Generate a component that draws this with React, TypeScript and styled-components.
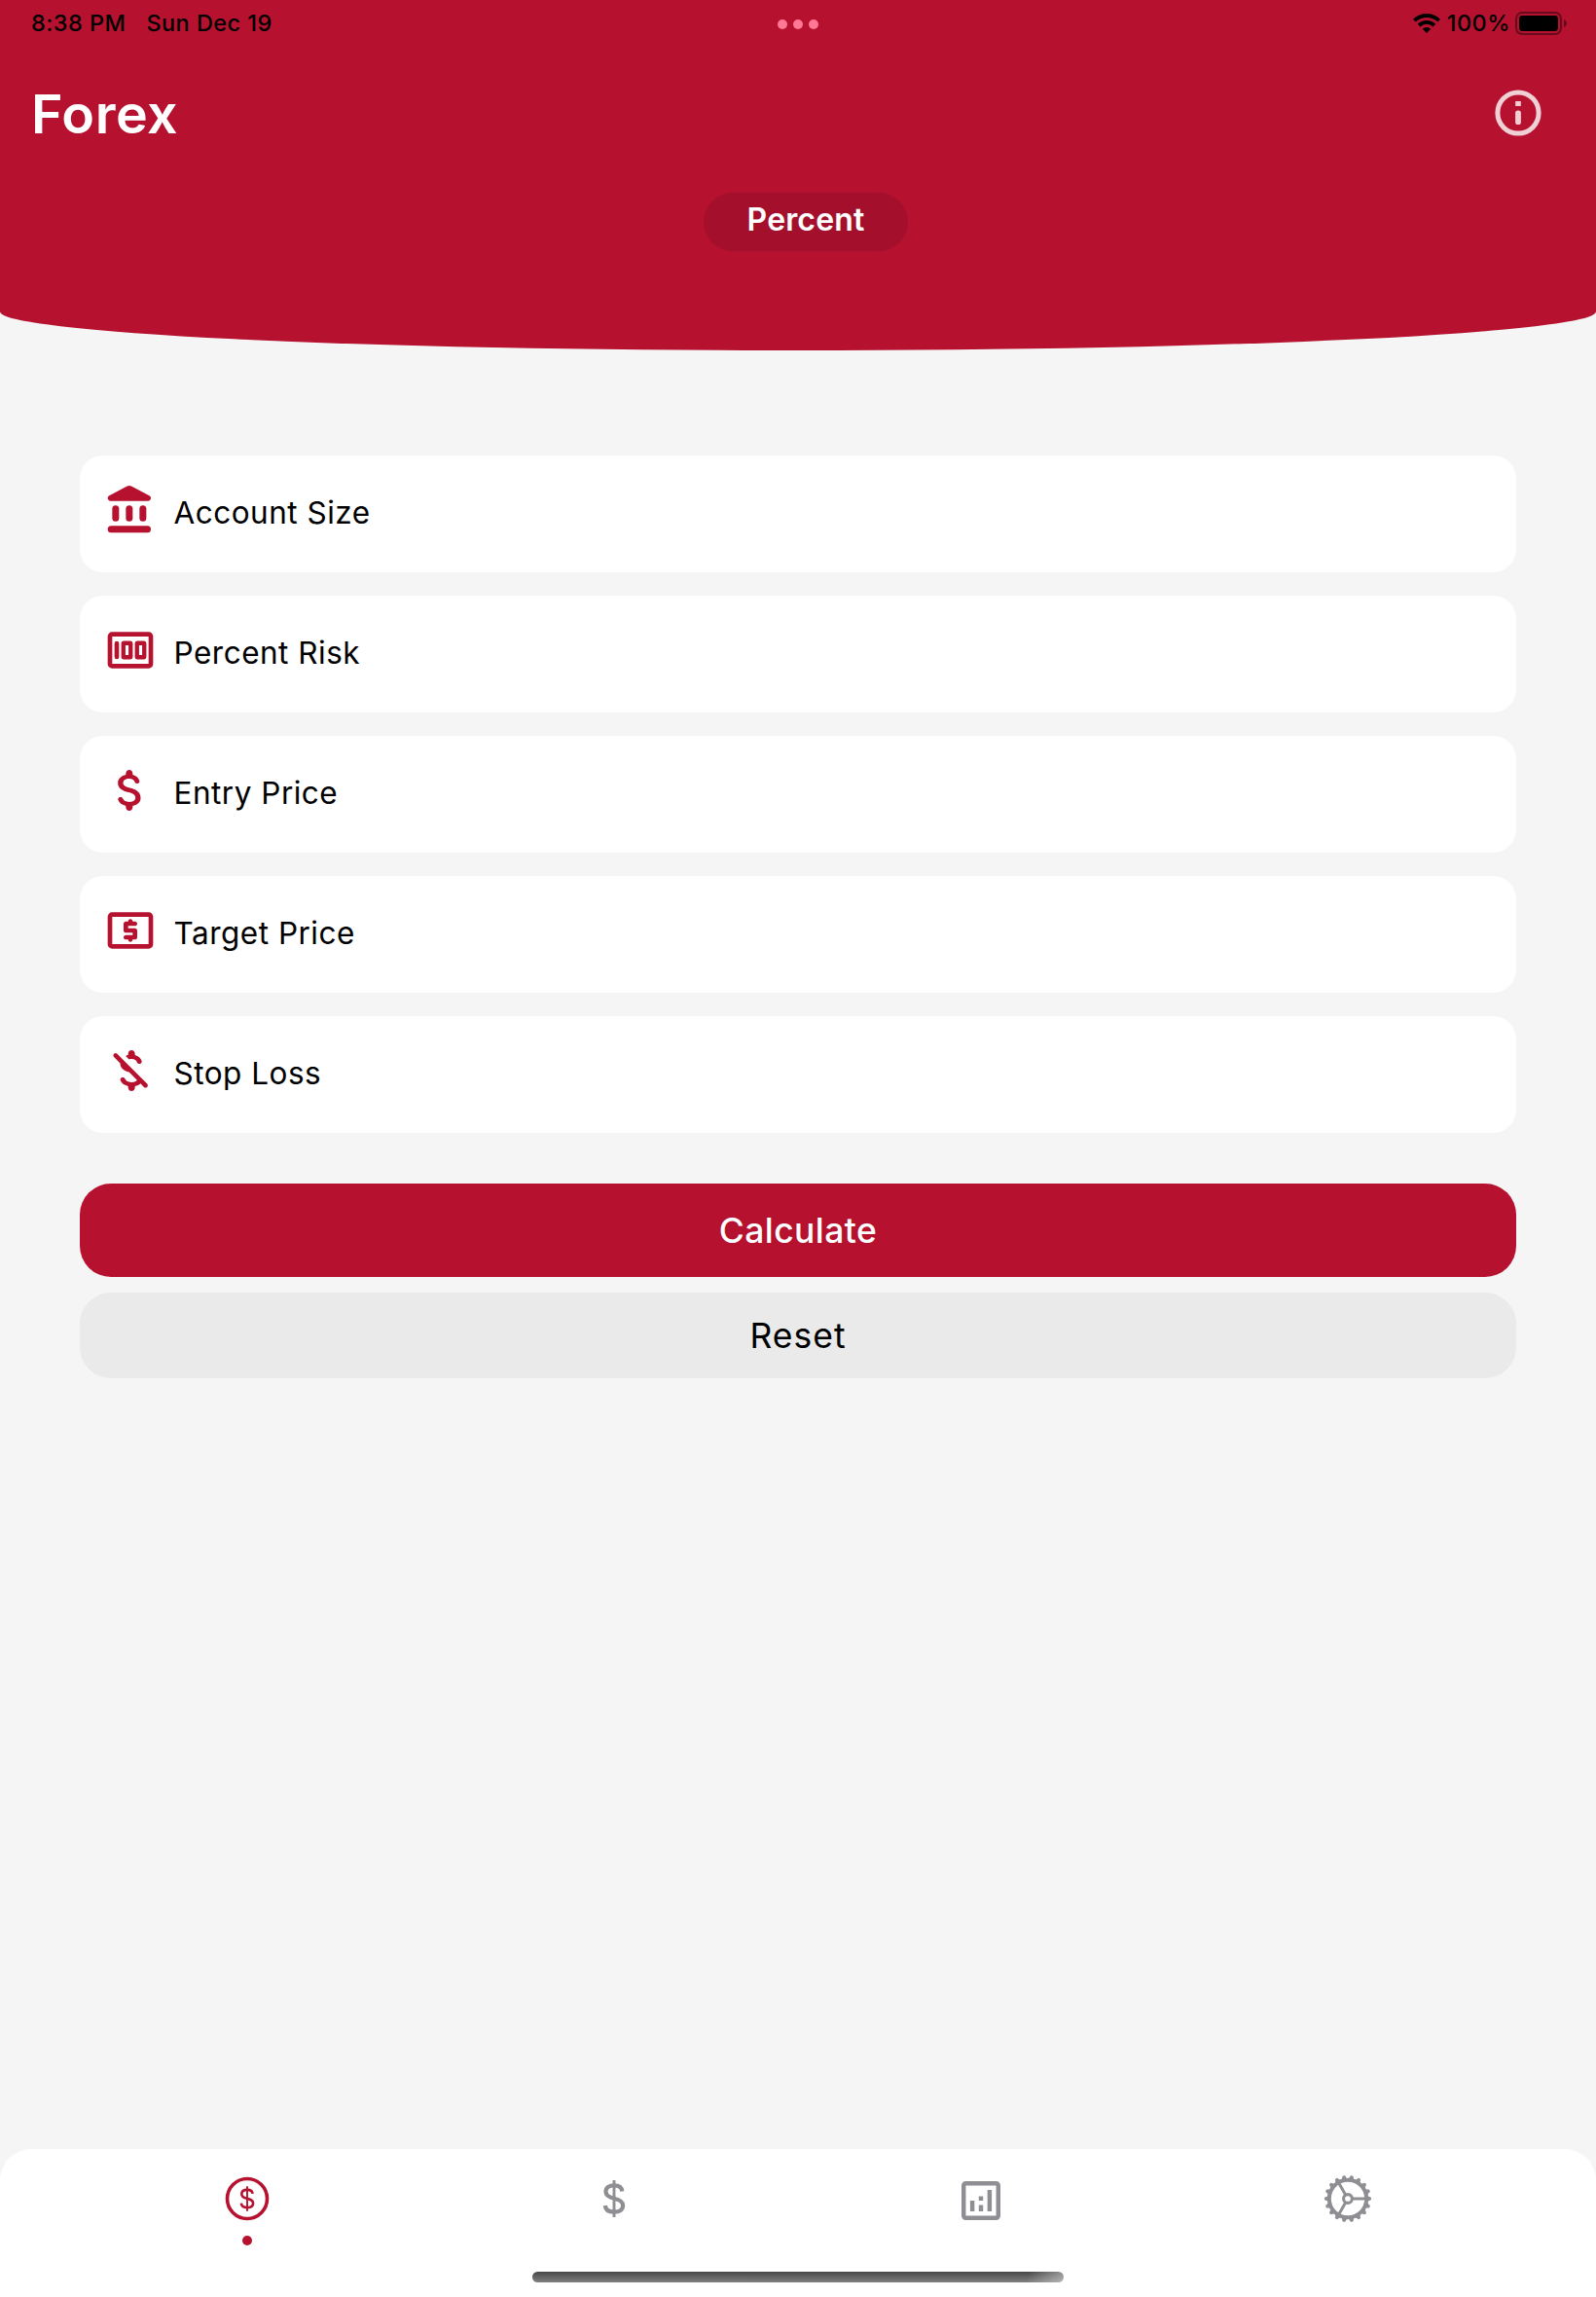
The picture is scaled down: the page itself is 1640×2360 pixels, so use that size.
import React from "react";
import styled, { createGlobalStyle } from "styled-components";

const RED = "#b6122f";
const GREY = "#8e8e93";

const GlobalStyle = createGlobalStyle`
  * { box-sizing: border-box; }
  body { margin: 0; background: #f5f5f5; font-family: Inter, "Liberation Sans", sans-serif; }
  button { font-family: inherit; border: 0; padding: 0; margin: 0; background: none; cursor: pointer; }
  svg { display: block; flex: none; }
`;

const Screen = styled.div`
  width: 1640px;
  height: 2360px;
  display: flex;
  flex-direction: column;
  background: #f5f5f5;
  overflow: hidden;
`;

const Header = styled.header`
  height: 360px;
  flex: none;
  background: ${RED};
  border-radius: 0 0 50% 50% / 0 0 40px 40px;
`;

const StatusBar = styled.div`
  display: grid;
  grid-template-columns: 1fr auto 1fr;
  align-items: center;
  height: 48px;
  padding: 0 29px 0 32px;
  color: #000;
`;

const StatusGroup = styled.div<{ $end?: boolean }>`
  display: flex;
  align-items: center;
  gap: ${(p) => (p.$end ? 0 : 21)}px;
  justify-content: ${(p) => (p.$end ? "flex-end" : "flex-start")};
`;

const StatusText = styled.span`
  font-size: 23.5px;
  font-weight: 500;
  line-height: 48px;
  white-space: nowrap;
  letter-spacing: 0.45px;
`;

const BatteryText = styled(StatusText)`
  margin: 0 5px 0 7px;
`;

const Dots = styled.div`
  display: flex;
  gap: 6px;
  padding: 2px 3px 0 0;
`;

const Dot = styled.i<{ $color: string }>`
  width: 10px;
  height: 10px;
  border-radius: 50%;
  background: ${(p) => p.$color};
`;

const TitleBar = styled.div`
  display: flex;
  align-items: center;
  justify-content: space-between;
  height: 136px;
  padding: 0 52px 0 32px;
`;

const Title = styled.h1`
  margin: 2px 0 0;
  font-size: 55.5px;
  font-weight: 600;
  line-height: 64px;
  letter-spacing: 0.5px;
  color: #fff;
`;

const SegmentRow = styled.div`
  display: flex;
  justify-content: center;
  padding: 14px 0 0 16px;
`;

const Segment = styled.button`
  width: 210px;
  height: 60px;
  padding-bottom: 6px;
  border-radius: 30px;
  background: #a4102b;
  color: #fff;
  font-size: 32px;
  font-weight: 600;
  letter-spacing: 0.15px;
`;

const Form = styled.main`
  flex: 1;
  display: flex;
  flex-direction: column;
  padding: 108px 82px 0;
`;

const Fields = styled.div`
  display: flex;
  flex-direction: column;
  gap: 24px;
  margin-bottom: 52px;
`;

const Field = styled.label`
  display: flex;
  align-items: center;
  gap: 16.5px;
  height: 120px;
  padding-left: 24px;
  border-radius: 24px;
  background: #fff;
  color: ${RED};

  svg { margin-bottom: 8px; }
`;

const FieldLabel = styled.span`
  color: #000;
  font-size: 31.5px;
  font-weight: 400;
  line-height: 40px;
  letter-spacing: 0.5px;
  margin-top: -2px;
`;

const Action = styled.button<{ $primary?: boolean }>`
  height: ${(p) => (p.$primary ? 96 : 88)}px;
  margin-bottom: 16px;
  border-radius: 32px;
  background: ${(p) => (p.$primary ? RED : "#eaeaea")};
  color: ${(p) => (p.$primary ? "#fff" : "#000")};
  font-size: 35.5px;
  font-weight: ${(p) => (p.$primary ? 500 : 400)};
  letter-spacing: ${(p) => (p.$primary ? 0.4 : 1)}px;
`;

const TabBar = styled.nav`
  flex: none;
  height: 152px;
  border-radius: 32px 32px 0 0;
  background: #fff;
`;

const Tabs = styled.div`
  display: grid;
  grid-template-columns: repeat(4, 377px);
  justify-content: center;
  height: 126px;
  padding: 23px 2px 0 0;
`;

const Tab = styled.button<{ $active?: boolean }>`
  display: flex;
  flex-direction: column;
  align-items: center;
  justify-content: flex-start;
  gap: 9.5px;
  color: ${(p) => (p.$active ? RED : GREY)};
`;

const HomeIndicator = styled.div`
  width: 546px;
  height: 11px;
  margin: 0 auto;
  border-radius: 6px;
  background:
    linear-gradient(100deg, rgba(255, 255, 255, 0) 93%, rgba(255, 255, 255, 0.42) 100%),
    linear-gradient(#464646, #818181);
`;

const Icon = ({ size, children }: { size: number; children: React.ReactNode }) => (
  <svg width={size} height={size} viewBox="0 0 24 24" fill="currentColor">
    {children}
  </svg>
);

const NoteFrame = () => (
  <rect x="3" y="5" width="18" height="14" rx="0.9" fill="none" stroke="currentColor" strokeWidth="2" />
);

const BankIcon = () => (
  <Icon size={56}>
    <path d="M10.57 1.49l-7.9 4.16c-.41.21-.67.64-.67 1.1C2 7.44 2.56 8 3.25 8h16.5C20.44 8 21 7.44 21 6.75c0-.46-.26-.89-.67-1.1l-7.9-4.16c-.58-.31-1.28-.31-1.86 0z" />
    <rect x="4" y="10" width="3" height="7" rx="1.5" />
    <rect x="10" y="10" width="3" height="7" rx="1.5" />
    <rect x="16" y="10" width="3" height="7" rx="1.5" />
    <rect x="2" y="19" width="19" height="3" rx="1.5" />
  </Icon>
);

const HundredIcon = () => (
  <Icon size={56}>
    <NoteFrame />
    <rect x="5" y="8" width="2" height="8" rx="1" />
    <rect x="8.9" y="8.9" width="3.2" height="6.2" rx="0.2" fill="none" stroke="currentColor" strokeWidth="1.85" />
    <rect x="14.9" y="8.9" width="3.2" height="6.2" rx="0.2" fill="none" stroke="currentColor" strokeWidth="1.85" />
  </Icon>
);

const DollarIcon = () => (
  <Icon size={56}>
    <path d="M11.8 10.9c-2.27-.59-3-1.2-3-2.15 0-1.09 1.01-1.85 2.7-1.85 1.42 0 2.13.54 2.39 1.4.12.4.45.7.87.7h.3c.66 0 1.13-.65.9-1.27-.42-1.18-1.4-2.16-2.96-2.54V4.5c0-.83-.67-1.5-1.5-1.5S10 3.67 10 4.5v.66c-1.94.42-3.5 1.68-3.5 3.61 0 2.31 1.91 3.46 4.7 4.13 2.5.6 3 1.48 3 2.41 0 .69-.49 1.79-2.7 1.79-1.65 0-2.5-.59-2.83-1.43-.15-.39-.49-.67-.9-.67h-.28c-.67 0-1.14.68-.89 1.3.57 1.39 1.9 2.21 3.4 2.53v.67c0 .83.67 1.5 1.5 1.5s1.5-.67 1.5-1.5v-.65c1.95-.37 3.5-1.5 3.5-3.55 0-2.84-2.43-3.81-4.7-4.4z" />
  </Icon>
);

const BanknoteIcon = () => (
  <Icon size={56}>
    <NoteFrame />
    <path d="M12 17c.55 0 1-.45 1-1h1c.55 0 1-.45 1-1v-3c0-.55-.45-1-1-1h-3v-1h3c.55 0 1-.45 1-1s-.45-1-1-1h-1c0-.55-.45-1-1-1s-1 .45-1 1h-1c-.55 0-1 .45-1 1v3c0 .55.45 1 1 1h3v1h-3c-.55 0-1 .45-1 1s.45 1 1 1h1c0 .55.45 1 1 1z" />
  </Icon>
);

const DollarOffIcon = () => (
  <Icon size={56}>
    <path d="M12.5 6.9c1.42 0 2.13.54 2.39 1.4.12.4.45.7.87.7h.3c.66 0 1.13-.65.9-1.27-.42-1.18-1.4-2.16-2.96-2.54V4.5c0-.83-.67-1.5-1.5-1.5S11 3.67 11 4.5v.66c-.39.08-.75.21-1.1.36l1.51 1.51c.32-.08.69-.13 1.09-.13z" />
    <path d="M4.77 4.62c-.39.39-.39 1.02 0 1.41L7.5 8.77c0 2.08 1.56 3.22 3.91 3.91l3.51 3.51c-.34.49-1.05.91-2.42.91-1.65 0-2.5-.59-2.83-1.43-.15-.39-.49-.67-.9-.67h-.28c-.67 0-1.14.68-.89 1.3.57 1.39 1.9 2.21 3.4 2.53v.67c0 .83.67 1.5 1.5 1.5s1.5-.67 1.5-1.5v-.65c.96-.18 1.83-.55 2.46-1.12l1.51 1.51c.39.39 1.02.39 1.41 0s.39-1.02 0-1.41L6.18 4.62c-.39-.39-1.02-.39-1.41 0z" />
  </Icon>
);

const InfoIcon = () => (
  <svg width="56" height="56" viewBox="-28 -28 56 56" fill="#f0cfd5">
    <circle r="21.100" fill="none" stroke="#f0cfd5" strokeWidth="5" />
    <rect x="-2.8" y="-12" width="5.6" height="5" />
    <rect x="-2.9" y="-2.6" width="5.8" height="14.6" rx="2.6" />
  </svg>
);

const WifiIcon = () => (
  <svg width="28" height="20" viewBox="0 0 28 20" fill="none" stroke="#000" strokeWidth="3.9">
    <path d="M1.3 7.2a18.2 18.2 0 0 1 25.4 0" />
    <path d="M6.1 12.1a11.3 11.3 0 0 1 15.8 0" />
    <path d="M14 20l-4.2-4.3a6.2 6.2 0 0 1 8.4 0z" fill="#000" stroke="none" />
  </svg>
);

const BatteryIcon = () => (
  <svg width="54" height="24" viewBox="0 0 54 24">
    <rect x="1" y="1" width="46" height="22" rx="6" fill="none" stroke="#000" strokeOpacity="0.42" strokeWidth="2" />
    <rect x="4" y="4" width="40" height="16" rx="3.4" />
    <path d="M50 8c4 1.600 4 6.400 0 8z" fillOpacity="0.42" />
  </svg>
);

const DollarStroke = ({ bar, weight }: { bar: number; weight: number }) => (
  <g fill="none" stroke="currentColor">
    <path
      strokeWidth={weight}
      d="M8.300-7.500C8-11.400 5-13.600 0-13.600C-5-13.600-8.500-11.300-8.500-7.200C-8.500-3.500-6-1.600 0-.3C6.200 1 9.100 2.900 9.100 7C9.100 11.300 5.600 13.600 0 13.600C-5.500 13.600-8.800 11.300-9.100 7"
    />
    <path strokeWidth={bar} d="M0-19V19" />
  </g>
);

const MoneyCircleTab = () => (
  <svg width="56" height="56" viewBox="-28 -28 56 56">
    <circle r="20.500" fill="none" stroke="currentColor" strokeWidth="3.600" />
    <g transform="scale(0.67)">
      <DollarStroke bar={2.8} weight={3.9} />
    </g>
  </svg>
);

const MoneyTab = () => (
  <svg width="56" height="56" viewBox="-28 -28 56 56">
    <DollarStroke bar={2.9} weight={4.2} />
  </svg>
);

const AnalyticsTab = () => (
  <svg width="56" height="56" viewBox="-0.6 -1.5 25.2 25.2" fill="currentColor">
    <rect x="4" y="4" width="16" height="16" rx="1" fill="none" stroke="currentColor" strokeWidth="2" />
    <path d="M7 12h2v5H7zM11 14h2v3h-2zM11 10h2v2h-2zM15 7h2v10h-2z" />
  </svg>
);

const teeth = Array.from({ length: 18 }, (_, i) => i * 20);

const GearTab = () => (
  <svg width="56" height="56" viewBox="-28 -28 56 56" fill="none" stroke="currentColor">
    <circle r="19.200" strokeWidth="4" />
    <circle r="4.400" strokeWidth="3.100" />
    {[0, 120, 240].map((a) => (
      <path key={a} d="M5 0H19" strokeWidth="3" transform={`rotate(${a})`} />
    ))}
    {teeth.map((a) => (
      <path
        key={a}
        d="M20-2.800L23.500-1.500Q24.900 0 23.500 1.500L20 2.800z"
        fill="currentColor"
        stroke="none"
        transform={`rotate(${a})`}
      />
    ))}
  </svg>
);

const fields = [
  { label: "Account Size", icon: <BankIcon /> },
  { label: "Percent Risk", icon: <HundredIcon /> },
  { label: "Entry Price", icon: <DollarIcon /> },
  { label: "Target Price", icon: <BanknoteIcon /> },
  { label: "Stop Loss", icon: <DollarOffIcon /> },
];

export default function App() {
  return (
    <Screen>
      <GlobalStyle />
      <Header>
        <StatusBar>
          <StatusGroup>
            <StatusText>8:38 PM</StatusText>
            <StatusText>Sun Dec 19</StatusText>
          </StatusGroup>
          <Dots>
            <Dot $color="#ff7896" />
            <Dot $color="#ff7896" />
            <Dot $color="#ff7896" />
          </Dots>
          <StatusGroup $end>
            <WifiIcon />
            <BatteryText>100%</BatteryText>
            <BatteryIcon />
          </StatusGroup>
        </StatusBar>
        <TitleBar>
          <Title>Forex</Title>
          <InfoIcon />
        </TitleBar>
        <SegmentRow>
          <Segment>Percent</Segment>
        </SegmentRow>
      </Header>
      <Form>
        <Fields>
          {fields.map((f) => (
            <Field key={f.label}>
              {f.icon}
              <FieldLabel>{f.label}</FieldLabel>
            </Field>
          ))}
        </Fields>
        <Action $primary>Calculate</Action>
        <Action>Reset</Action>
      </Form>
      <TabBar>
        <Tabs>
          <Tab $active>
            <MoneyCircleTab />
            <Dot $color={RED} />
          </Tab>
          <Tab><MoneyTab /></Tab>
          <Tab><AnalyticsTab /></Tab>
          <Tab><GearTab /></Tab>
        </Tabs>
        <HomeIndicator />
      </TabBar>
    </Screen>
  );
}
